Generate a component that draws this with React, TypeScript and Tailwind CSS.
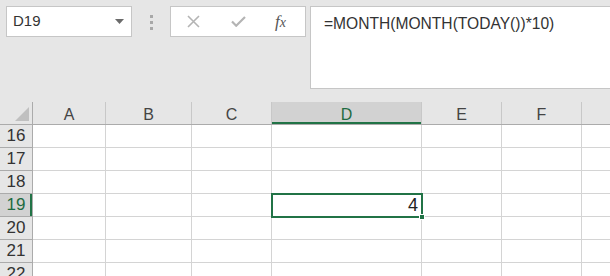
const cols = [
    { name: "A", w: "w-[73px]" },
    { name: "B", w: "w-[86px]" },
    { name: "C", w: "w-[80px]" },
    { name: "D", w: "w-[150px]" },
    { name: "E", w: "w-[80px]" },
    { name: "F", w: "w-[80px]" },
    { name: "", w: "w-[60px]" },
]

const rows = [16, 17, 18, 19, 20, 21, 22]

function Toolbar() {
    return (
        <div className="flex h-[102px] items-start pt-[6px] pl-[6px]">
            <div className="flex h-[31px] w-[126px] shrink-0 items-center justify-between border border-[#c6c6c6] bg-white pl-[6px] pr-[7px]">
                <span className="text-[15px] text-[#333]">D19</span>
                <svg width="9" height="5" viewBox="0 0 9 5">
                    <path d="M0 0h9L4.5 5z" fill="#6b6b6b" />
                </svg>
            </div>
            <div className="flex w-[38px] shrink-0 flex-col items-center gap-[3px] pt-[9px]">
                <span className="h-[3px] w-[3px] bg-[#a8a8a8]" />
                <span className="h-[3px] w-[3px] bg-[#a8a8a8]" />
                <span className="h-[3px] w-[3px] bg-[#a8a8a8]" />
            </div>
            <div className="flex h-[31px] w-[136px] shrink-0 items-center border border-[#c6c6c6] bg-white">
                <svg className="ml-[16px]" width="13" height="13" viewBox="0 0 13 13">
                    <path d="M1 1l11 11M12 1L1 12" stroke="#b4b4b4" strokeWidth="1.6" />
                </svg>
                <svg className="ml-[31px]" width="15" height="11" viewBox="0 0 15 11">
                    <path d="M1 5.5l4.2 4.2L14 1" stroke="#b4b4b4" strokeWidth="2.2" fill="none" />
                </svg>
                <span className="ml-[29px] font-['Liberation_Serif',serif] text-[17px] italic text-[#555]">
                    f<span className="text-[14px]">x</span>
                </span>
            </div>
            <div className="ml-[4px] h-[83px] w-[320px] shrink-0 border border-[#c6c6c6] bg-white pl-[13px] pt-[5px]">
                <span className="text-[15.6px] text-[#333]">=MONTH(MONTH(TODAY())*10)</span>
            </div>
        </div>
    )
}

function HeaderRow() {
    return (
        <div className="flex h-[23px] border-b border-[#ababab]">
            <div className="relative w-[33px] shrink-0 border-r border-[#ababab]">
                <svg className="absolute right-[3px] bottom-[3px]" width="14" height="14" viewBox="0 0 14 14">
                    <path d="M14 0v14H0z" fill="#c0c0c0" />
                </svg>
            </div>
            {cols.map((c) => (
                <div
                    key={c.name + c.w}
                    className={`${c.w} flex shrink-0 items-center justify-center border-r border-[#c8c8c8] pt-[3px] text-[16px] ${
                        c.name === "D" ? "bg-[#d2d2d2] text-[#1e6b41] shadow-[inset_0_-2px_0_#217346]" : "text-[#444]"
                    }`}
                >
                    {c.name}
                </div>
            ))}
        </div>
    )
}

export default function App() {
    return (
        <div className="h-[276px] w-[610px] overflow-hidden bg-[#e6e6e6] font-['Liberation_Sans',sans-serif]">
            <Toolbar />
            <HeaderRow />
            {rows.map((r) => (
                <div key={r} className="flex h-[23px]">
                    <div
                        className={`flex w-[33px] shrink-0 items-center justify-center border-b border-r border-[#ababab] text-[17px] ${
                            r === 19 ? "bg-[#d2d2d2] text-[#1e6b41] shadow-[inset_-2px_0_0_#217346]" : "text-[#333]"
                        }`}
                    >
                        {r}
                    </div>
                    {cols.map((c) => (
                        <div
                            key={c.name + c.w}
                            className={`${c.w} relative shrink-0 border-b border-r border-[#d4d4d4] bg-white`}
                        >
                            {r === 19 && c.name === "D" && (
                                <div className="absolute -top-[1px] -left-[1px] z-10 flex h-[25px] w-[152px] items-center justify-end border-2 border-[#217346] pr-[3px] text-[18px] text-[#222]">
                                    4
                                    <span className="absolute -right-[4px] -bottom-[4px] h-[6px] w-[6px] border border-white bg-[#217346]" />
                                </div>
                            )}
                        </div>
                    ))}
                </div>
            ))}
        </div>
    )
}
